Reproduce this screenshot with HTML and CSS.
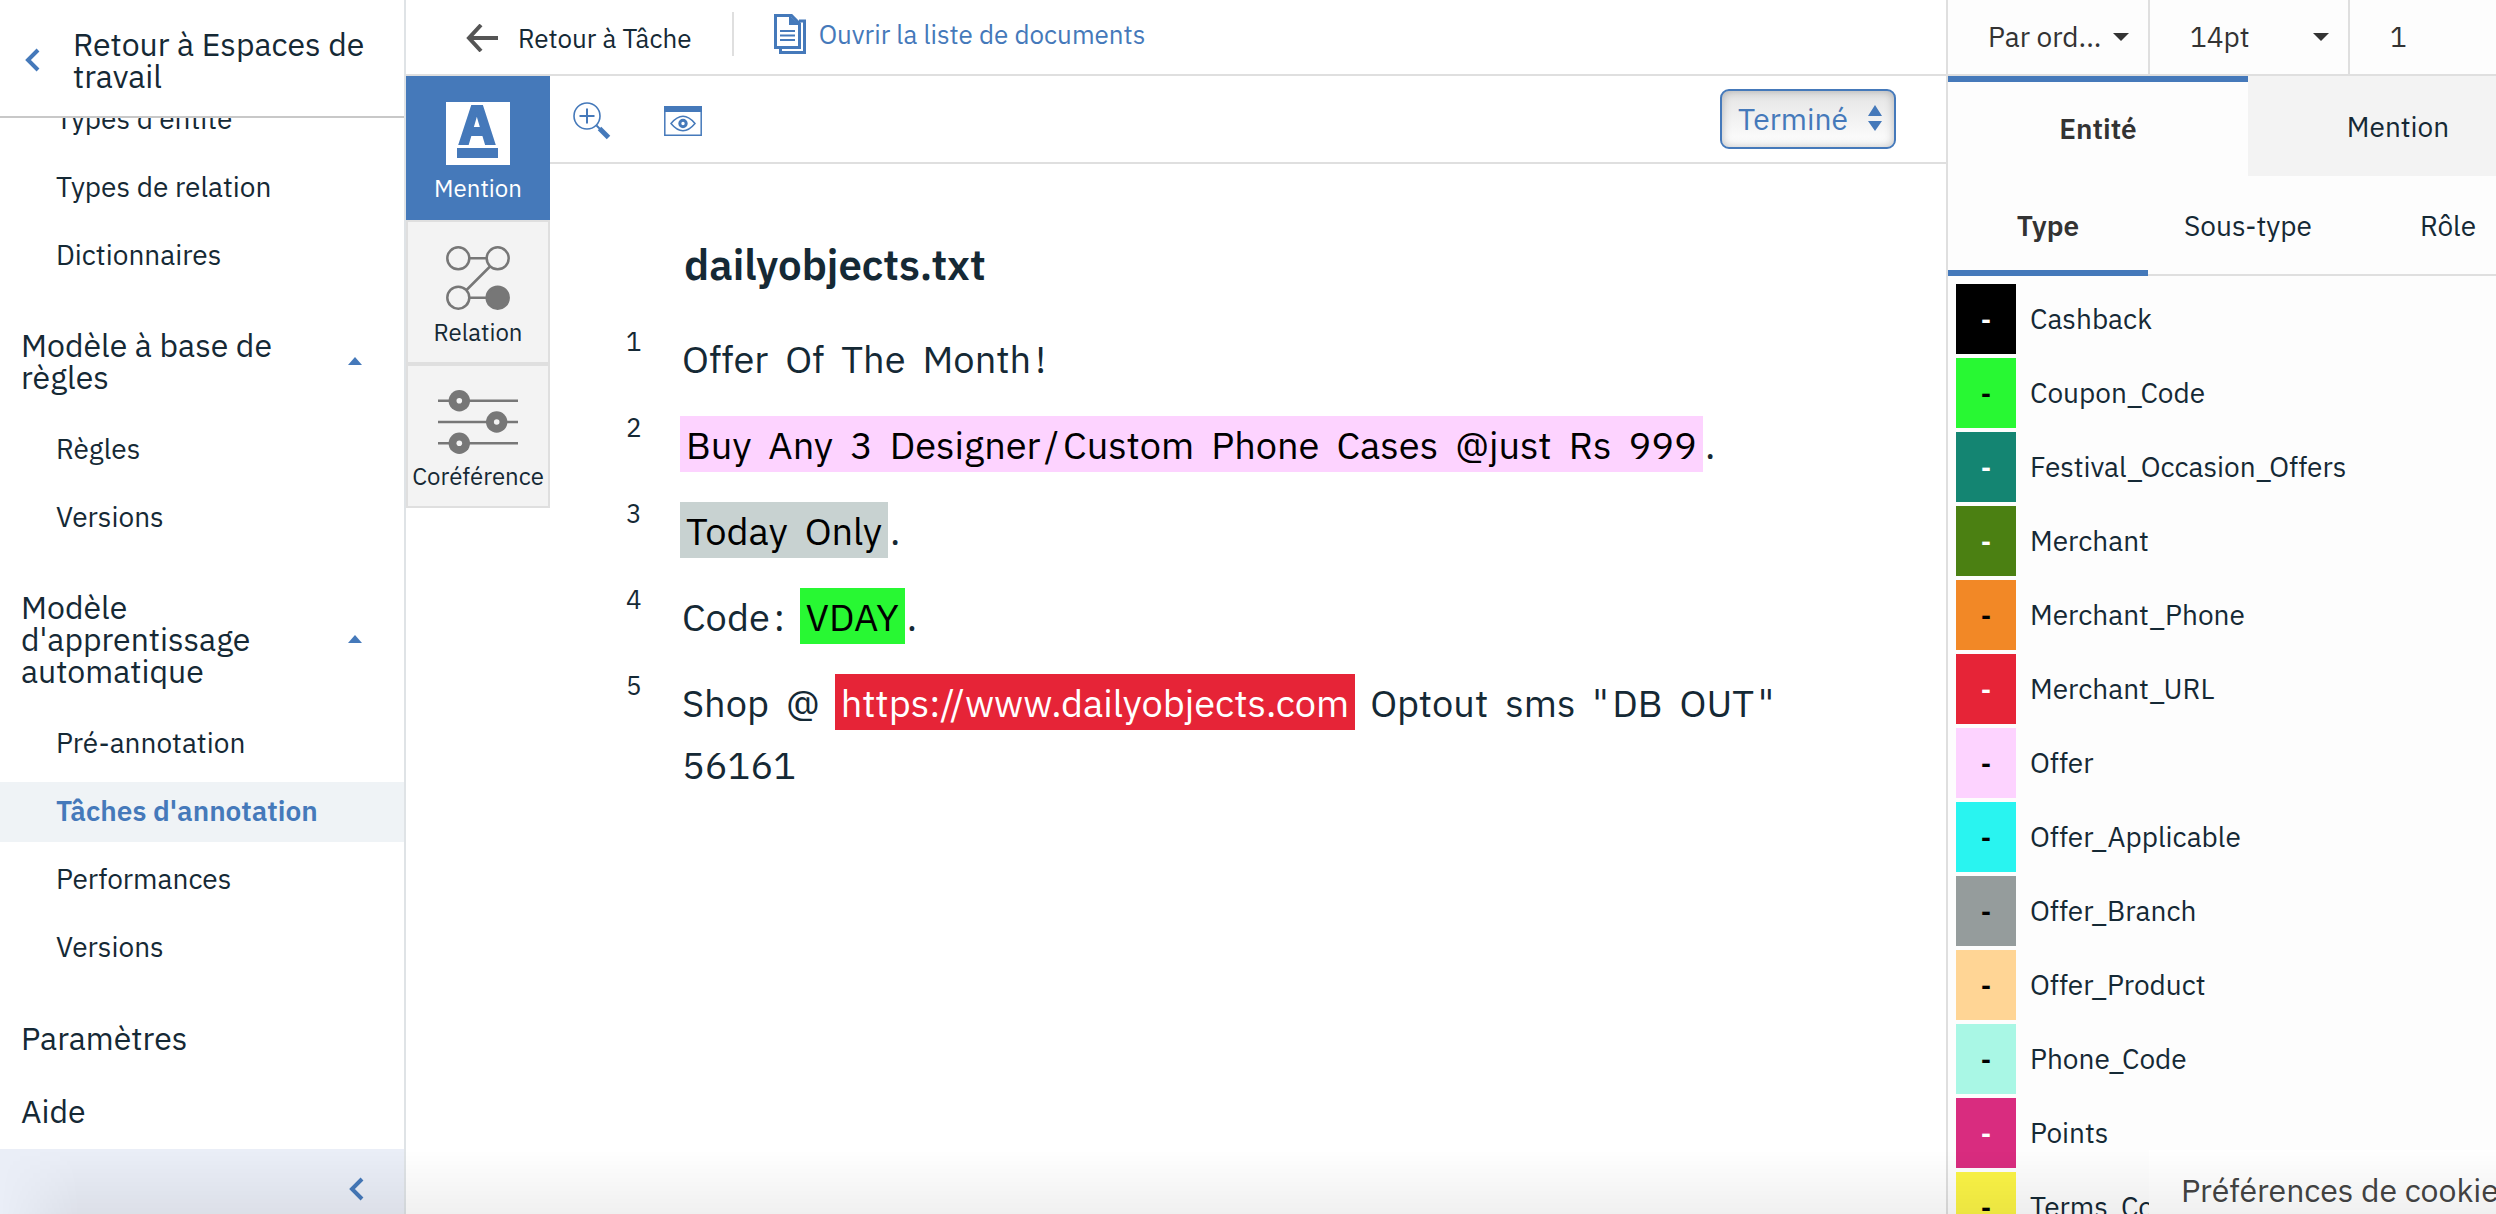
FILE: index.html
```html
<!DOCTYPE html>
<html lang="fr">
<head>
<meta charset="utf-8">
<title>dailyobjects.txt</title>
<link rel="stylesheet" href="styles.css">
</head>
<body>
<div class="app">
  <aside class="sidebar">
    <a class="sidebar-back" href="#">
      <svg width="16" height="24" viewBox="0 0 16 24" aria-hidden="true"><path d="M14 2 4 12l10 10" fill="none" stroke="#4579ba" stroke-width="4"/></svg>
      <span>Retour à Espaces de travail</span>
    </a>
    <nav class="nav">
      <div class="nav-scroll">
        <a class="nav-item" href="#">Types d'entité</a>
        <a class="nav-item" href="#">Types de relation</a>
        <a class="nav-item" href="#">Dictionnaires</a>
        <button class="nav-group" type="button"><span>Modèle à base de règles</span><svg width="14" height="8" aria-hidden="true"><path d="M7 0l7 8H0z" fill="#4579ba"/></svg></button>
        <a class="nav-item" href="#">Règles</a>
        <a class="nav-item" href="#">Versions</a>
        <button class="nav-group" type="button"><span>Modèle d'apprentissage automatique</span><svg width="14" height="8" aria-hidden="true"><path d="M7 0l7 8H0z" fill="#4579ba"/></svg></button>
        <a class="nav-item" href="#">Pré-annotation</a>
        <a class="nav-item active" href="#">Tâches d'annotation</a>
        <a class="nav-item" href="#">Performances</a>
        <a class="nav-item" href="#">Versions</a>
        <a class="nav-top" href="#">Paramètres</a>
        <a class="nav-top nav-last" href="#">Aide</a>
      </div>
    </nav>
    <button class="collapse" type="button" aria-label="Réduire">
      <svg width="16" height="24" viewBox="0 0 16 24" aria-hidden="true"><path d="M14 2 4 12l10 10" fill="none" stroke="#4579ba" stroke-width="4"/></svg>
    </button>
  </aside>

  <main class="work">
    <header class="topbar">
      <a class="back-task" href="#">
        <svg width="32" height="28" viewBox="0 0 32 28" aria-hidden="true"><path d="M15 1 3 14l12 13M3 14h29" fill="none" stroke="#555" stroke-width="4"/></svg>
        <span>Retour à Tâche</span>
      </a>
      <a class="open-list" href="#">
        <svg width="32" height="40" viewBox="0 0 32 40" aria-hidden="true">
          <path d="M1.500 1.500h16l8 8v24h-24z" fill="none" stroke="#4579ba" stroke-width="3"/>
          <path d="M15 1v10h11z" fill="#4579ba"/>
          <path d="M6 17h15M6 21.500h15M6 26h15" stroke="#4579ba" stroke-width="2.200"/>
          <path d="M25 7h5.500v31.500H6.500V34" fill="none" stroke="#4579ba" stroke-width="3"/>
        </svg>
        <span>Ouvrir la liste de documents</span>
      </a>
    </header>
    <div class="work-body">
      <div class="modes">
        <button class="mode selected" type="button">
          <svg width="64" height="64" viewBox="0 0 64 64" aria-hidden="true"><path fill="#fff" d="M0 0h64v63H0z"/><text class="mode-letter" x="31" y="42" text-anchor="middle">A</text><path fill="#4579ba" d="M11 46h41v10H11z"/></svg>
          <span>Mention</span>
        </button>
        <button class="mode" type="button">
          <svg width="64" height="64" viewBox="0 0 64 64" fill="none" stroke="#777" stroke-width="2.500" aria-hidden="true"><circle cx="12.300" cy="12.300" r="11"/><circle cx="51.700" cy="12.300" r="11"/><circle cx="12.300" cy="51.700" r="11"/><circle cx="51.700" cy="51.700" r="11" fill="#777"/><path d="M23.500 12.300h17M23.500 51.700h17M44 20.500 20.500 44"/></svg>
          <span>Relation</span>
        </button>
        <button class="mode" type="button">
          <svg width="80" height="64" viewBox="0 0 80 64" fill="#777" aria-hidden="true"><path d="M0 10.700h80M0 32h80M0 53.300h80" stroke="#777" stroke-width="2.600"/><circle cx="21.300" cy="10.700" r="10.700"/><circle cx="58.700" cy="32" r="10.700"/><circle cx="21.300" cy="53.300" r="10.700"/><g fill="#f3f3f3"><circle cx="21.300" cy="10.700" r="2.800"/><circle cx="58.700" cy="32" r="2.800"/><circle cx="21.300" cy="53.300" r="2.800"/></g></svg>
          <span>Coréférence</span>
        </button>
      </div>
      <div class="doc-pane">
        <div class="toolbar">
          <button class="tool" type="button" aria-label="Zoom avant">
            <svg width="38" height="38" viewBox="0 0 38 38" fill="none" stroke="#4579ba" aria-hidden="true"><circle cx="14" cy="14" r="13" stroke-width="1.600"/><path d="M14 6.500v15M6.500 14h15" stroke-width="2"/><path d="M23.500 23.500l3.500 3.500" stroke-width="2"/><path d="M26.500 26.500l9 9" stroke-width="5"/></svg>
          </button>
          <button class="tool" type="button" aria-label="Aperçu">
            <svg width="38" height="30" viewBox="0 0 38 30" fill="none" stroke="#4579ba" stroke-width="1.500" aria-hidden="true"><path d="M.8.8h36.400v28.400H.8z"/><path d="M0 0h38v6H0z" fill="#4579ba" stroke="none"/><path d="M7 17.500q12-14.500 24 0q-12 14.500-24 0z"/><circle cx="19" cy="17.500" r="3.200" stroke-width="3"/></svg>
          </button>
          <div class="status">
            <select class="status-select" aria-label="Statut"><option>Terminé</option></select>
            <svg class="status-arrows" width="14" height="26" viewBox="0 0 14 26" fill="#4579ba" aria-hidden="true"><path d="M7 0l7 11H0zM7 26l7-10H0z"/></svg>
          </div>
        </div>
        <article class="document">
          <h1 class="doc-title">dailyobjects.txt</h1>
          <div class="line"><span class="num">1</span><p><span>Offer</span><span> </span><span>Of</span><span> </span><span>The</span><span> </span><span>Month</span><span>!</span></p></div>
          <div class="line"><span class="num">2</span><p><mark class="offer"><span>Buy</span><span> </span><span>Any</span><span> </span><span>3</span><span> </span><span>Designer</span><span>/</span><span>Custom</span><span> </span><span>Phone</span><span> </span><span>Cases</span><span> </span><span>@just</span><span> </span><span>Rs</span><span> </span><span>999</span></mark><span>.</span></p></div>
          <div class="line"><span class="num">3</span><p><mark class="today"><span>Today</span><span> </span><span>Only</span></mark><span>.</span></p></div>
          <div class="line"><span class="num">4</span><p><span>Code</span><span>:</span><span> </span><mark class="coupon"><span>VDAY</span></mark><span>.</span></p></div>
          <div class="line"><span class="num">5</span><p><span>Shop</span><span> </span><span>@</span><span> </span><mark class="url"><span>https://www.dailyobjects.com</span></mark><span> </span><span>Optout</span><span> </span><span>sms</span><span> </span><span>"</span><span>DB</span><span> </span><span>OUT</span><span>"</span><span> </span><span>56161</span></p></div>
        </article>
      </div>
    </div>
  </main>

  <aside class="panel">
    <div class="panel-inner">
      <div class="settings">
        <div class="setting"><select aria-label="Tri"><option>Par ord...</option></select><svg width="16" height="8" aria-hidden="true"><path d="M0 0h16L8 8z" fill="#333"/></svg></div>
        <div class="setting"><select aria-label="Taille du texte"><option>14pt</option></select><svg width="16" height="8" aria-hidden="true"><path d="M0 0h16L8 8z" fill="#333"/></svg></div>
        <div class="setting"><select aria-label="Interligne"><option>1</option></select></div>
      </div>
      <div class="tabs" role="tablist">
        <button class="tab selected" role="tab" aria-selected="true">Entité</button>
        <button class="tab" role="tab">Mention</button>
      </div>
      <div class="subtabs" role="tablist">
        <button class="subtab selected" role="tab" aria-selected="true">Type</button>
        <button class="subtab" role="tab">Sous-type</button>
        <button class="subtab" role="tab">Rôle</button>
      </div>
      <ul class="types">
        <li><span class="swatch light cashback">-</span>Cashback</li>
        <li><span class="swatch coupon">-</span>Coupon_Code</li>
        <li><span class="swatch light festival">-</span>Festival_Occasion_Offers</li>
        <li><span class="swatch light merchant">-</span>Merchant</li>
        <li><span class="swatch phone">-</span>Merchant_Phone</li>
        <li><span class="swatch light url">-</span>Merchant_URL</li>
        <li><span class="swatch offer">-</span>Offer</li>
        <li><span class="swatch applicable">-</span>Offer_Applicable</li>
        <li><span class="swatch branch">-</span>Offer_Branch</li>
        <li><span class="swatch product">-</span>Offer_Product</li>
        <li><span class="swatch phone-code">-</span>Phone_Code</li>
        <li><span class="swatch light points">-</span>Points</li>
        <li><span class="swatch terms">-</span>Terms_Co</li>
      </ul>
    </div>
    <button class="cookies" type="button">Préférences de cookies</button>
  </aside>
</div>
<div class="bottom-shade"></div>
</body>
</html>
```
FILE: styles.css
```css
* { box-sizing: border-box; }
body {
  margin: 0;
  background: #fff;
  color: #152935;
  font-family: "IBM Plex Sans", Roboto, "Liberation Sans", sans-serif;
  font-size: 28px;
}
a { color: inherit; text-decoration: none; }
button, select { font: inherit; color: inherit; border: 0; background: none; margin: 0; padding: 0; border-radius: 0; }
svg { display: block; flex: none; }
.app {
  display: grid;
  grid-template-columns: 406px minmax(0, 1fr) 550px;
  height: 100vh;
  overflow: hidden;
}

/* Sidebar */
.sidebar { display: flex; flex-direction: column; min-height: 0; border-right: 2px solid #dfe3e6; }
.sidebar-back {
  display: flex; align-items: center; gap: 33px;
  height: 118px; flex: none;
  padding: 4px 24px 0;
  border-bottom: 2px solid #c8c8c8;
  font-size: 32px; line-height: 32px;
}
.nav { flex: 1; min-height: 0; overflow: hidden; }
.nav-scroll { margin-top: -28px; }
.nav-item { display: block; margin-bottom: 8px; padding: 0 0 2px 56px; line-height: 58px; }
.nav-item.active { background: #eff3f6; color: #4579ba; font-weight: 600; }
.nav-group {
  display: flex; align-items: center; justify-content: space-between;
  width: 100%;
  padding: 35px 42px 27px 21px;
  font-size: 32px; line-height: 32px; text-align: left;
}
.nav-group span { width: 270px; }
.nav-top { display: block; padding: 36px 21px 0; font-size: 32px; line-height: 32px; }
.nav-last { padding-top: 41px; }
.collapse {
  display: flex; align-items: center; justify-content: flex-end;
  flex: none; height: 65px; padding: 14px 40px 0 0;
  background: #eaeef7;
}

/* Work area */
.work { display: flex; flex-direction: column; min-width: 0; }
.topbar {
  display: flex; flex: none; height: 76px;
  padding-left: 60px;
  border-bottom: 2px solid #dfdfdf;
  font-size: 26px; line-height: 44px;
}
.back-task { display: flex; align-items: center; gap: 20px; height: 44px; margin-top: 16px; }
.open-list {
  display: flex; align-items: center; gap: 13px;
  height: 44px; margin: 12px 0 0 40px; padding-left: 40px;
  border-left: 2px solid #dfdfdf;
  color: #4579ba;
}
.work-body { display: flex; flex: 1; min-height: 0; }
.modes { width: 144px; flex: none; }
.mode {
  display: flex; flex-direction: column; align-items: center; gap: 8px;
  width: 100%; height: 144px; padding-top: 24px;
  border: 2px solid #dfdfdf; background: #f3f3f3;
  font-size: 24px; line-height: 28px;
}
.mode.selected { background: #4579ba; border-color: #4579ba; color: #fff; }
.mode-letter { font-size: 54px; font-weight: 700; fill: #4579ba; stroke: #4579ba; stroke-width: 2px; }
.doc-pane { flex: 1; min-width: 0; }
.toolbar {
  display: flex; align-items: center; gap: 53px;
  height: 88px; padding: 0 50px 0 23px;
  border-bottom: 2px solid #dfdfdf;
}
.tool { margin-top: 3px; }
.status { position: relative; margin-left: auto; }
.status-select {
  display: block; appearance: none;
  width: 176px; height: 60px; padding-left: 16px; padding-bottom: 2px;
  border: 2px solid #4579ba; border-radius: 9px;
  background: linear-gradient(#e4e4e4, #fff);
  box-shadow: inset 0 0 10px rgba(0, 0, 0, .25);
  color: #4579ba; font-size: 30px;
}
.status-arrows { position: absolute; right: 14px; top: 16px; pointer-events: none; }

.document { padding: 75px 100px 0 76px; font-size: 38px; line-height: 62px; }
.doc-title { margin: 0 0 37px 58px; font-size: 42px; line-height: 52px; font-weight: 600; }
.line { display: grid; grid-template-columns: 54px minmax(0, 1fr); margin-bottom: 24px; }
.line p { margin: 0; }
.line p span { padding: 0 2px; }
.num { font-size: 26px; line-height: 26px; }
mark { padding: 4px 4px 3px; color: #000; }
mark.url { color: #fff; }

/* Annotation panel */
.panel { position: relative; overflow: hidden; border-left: 2px solid #dfdfdf; background: #fdfdfd; }
.panel-inner { width: 600px; }
.settings { display: grid; grid-template-columns: 202px 200px 1fr; height: 76px; border-bottom: 2px solid #dfdfdf; color: #333; }
.setting { display: flex; align-items: center; padding-right: 19px; border-right: 2px solid #dfdfdf; }
.setting select { appearance: none; flex: 1; min-width: 0; height: 72px; padding-left: 40px; padding-bottom: 2px; }
.tabs { display: grid; grid-template-columns: 1fr 1fr; }
.tab { height: 100px; background: #f3f3f3; }
.tab.selected { padding-bottom: 2px; background: #fdfdfd; border-top: 6px solid #4579ba; color: #333; font-weight: 600; }
.subtabs { display: grid; grid-template-columns: repeat(3, 1fr); height: 100px; border-bottom: 2px solid #dfdfdf; }
.subtab { height: 100px; padding-top: 5px; border-bottom: 6px solid transparent; }
.subtab.selected { border-color: #4579ba; color: #333; font-weight: 600; }
.types { list-style: none; display: grid; gap: 4px; margin: 0; padding: 8px; }
.types li { display: flex; gap: 14px; line-height: 69px; }
.swatch { width: 60px; height: 70px; text-align: center; line-height: 70px; font-size: 26px; font-weight: 600; color: #000; }
.swatch.light { color: #fff; }
.cashback { background: #000; }
.coupon { background: #28f833; }
.festival { background: #148572; }
.merchant { background: #4b8012; }
.phone { background: #f28826; }
.url { background: #e62437; }
.offer { background: #fdd3ff; }
.applicable { background: #29f4f0; }
.branch { background: #959c9c; }
.product { background: #ffd595; }
.phone-code { background: #a9f7e5; }
.points { background: #d92c7f; }
.terms { background: #fbf446; }
.today { background: #c8d2d1; }
.cookies {
  position: absolute; left: 201px; bottom: 0;
  height: 64px; padding: 16px 32px 0;
  background: #fff; color: #444;
  font-size: 32px; white-space: nowrap;
}
.bottom-shade {
  position: fixed; left: 0; right: 0; bottom: 0; height: 64px;
  background: linear-gradient(transparent, rgba(0, 0, 0, .06));
  mask-image: linear-gradient(90deg, transparent, #000 80px);
  pointer-events: none;
}
```
